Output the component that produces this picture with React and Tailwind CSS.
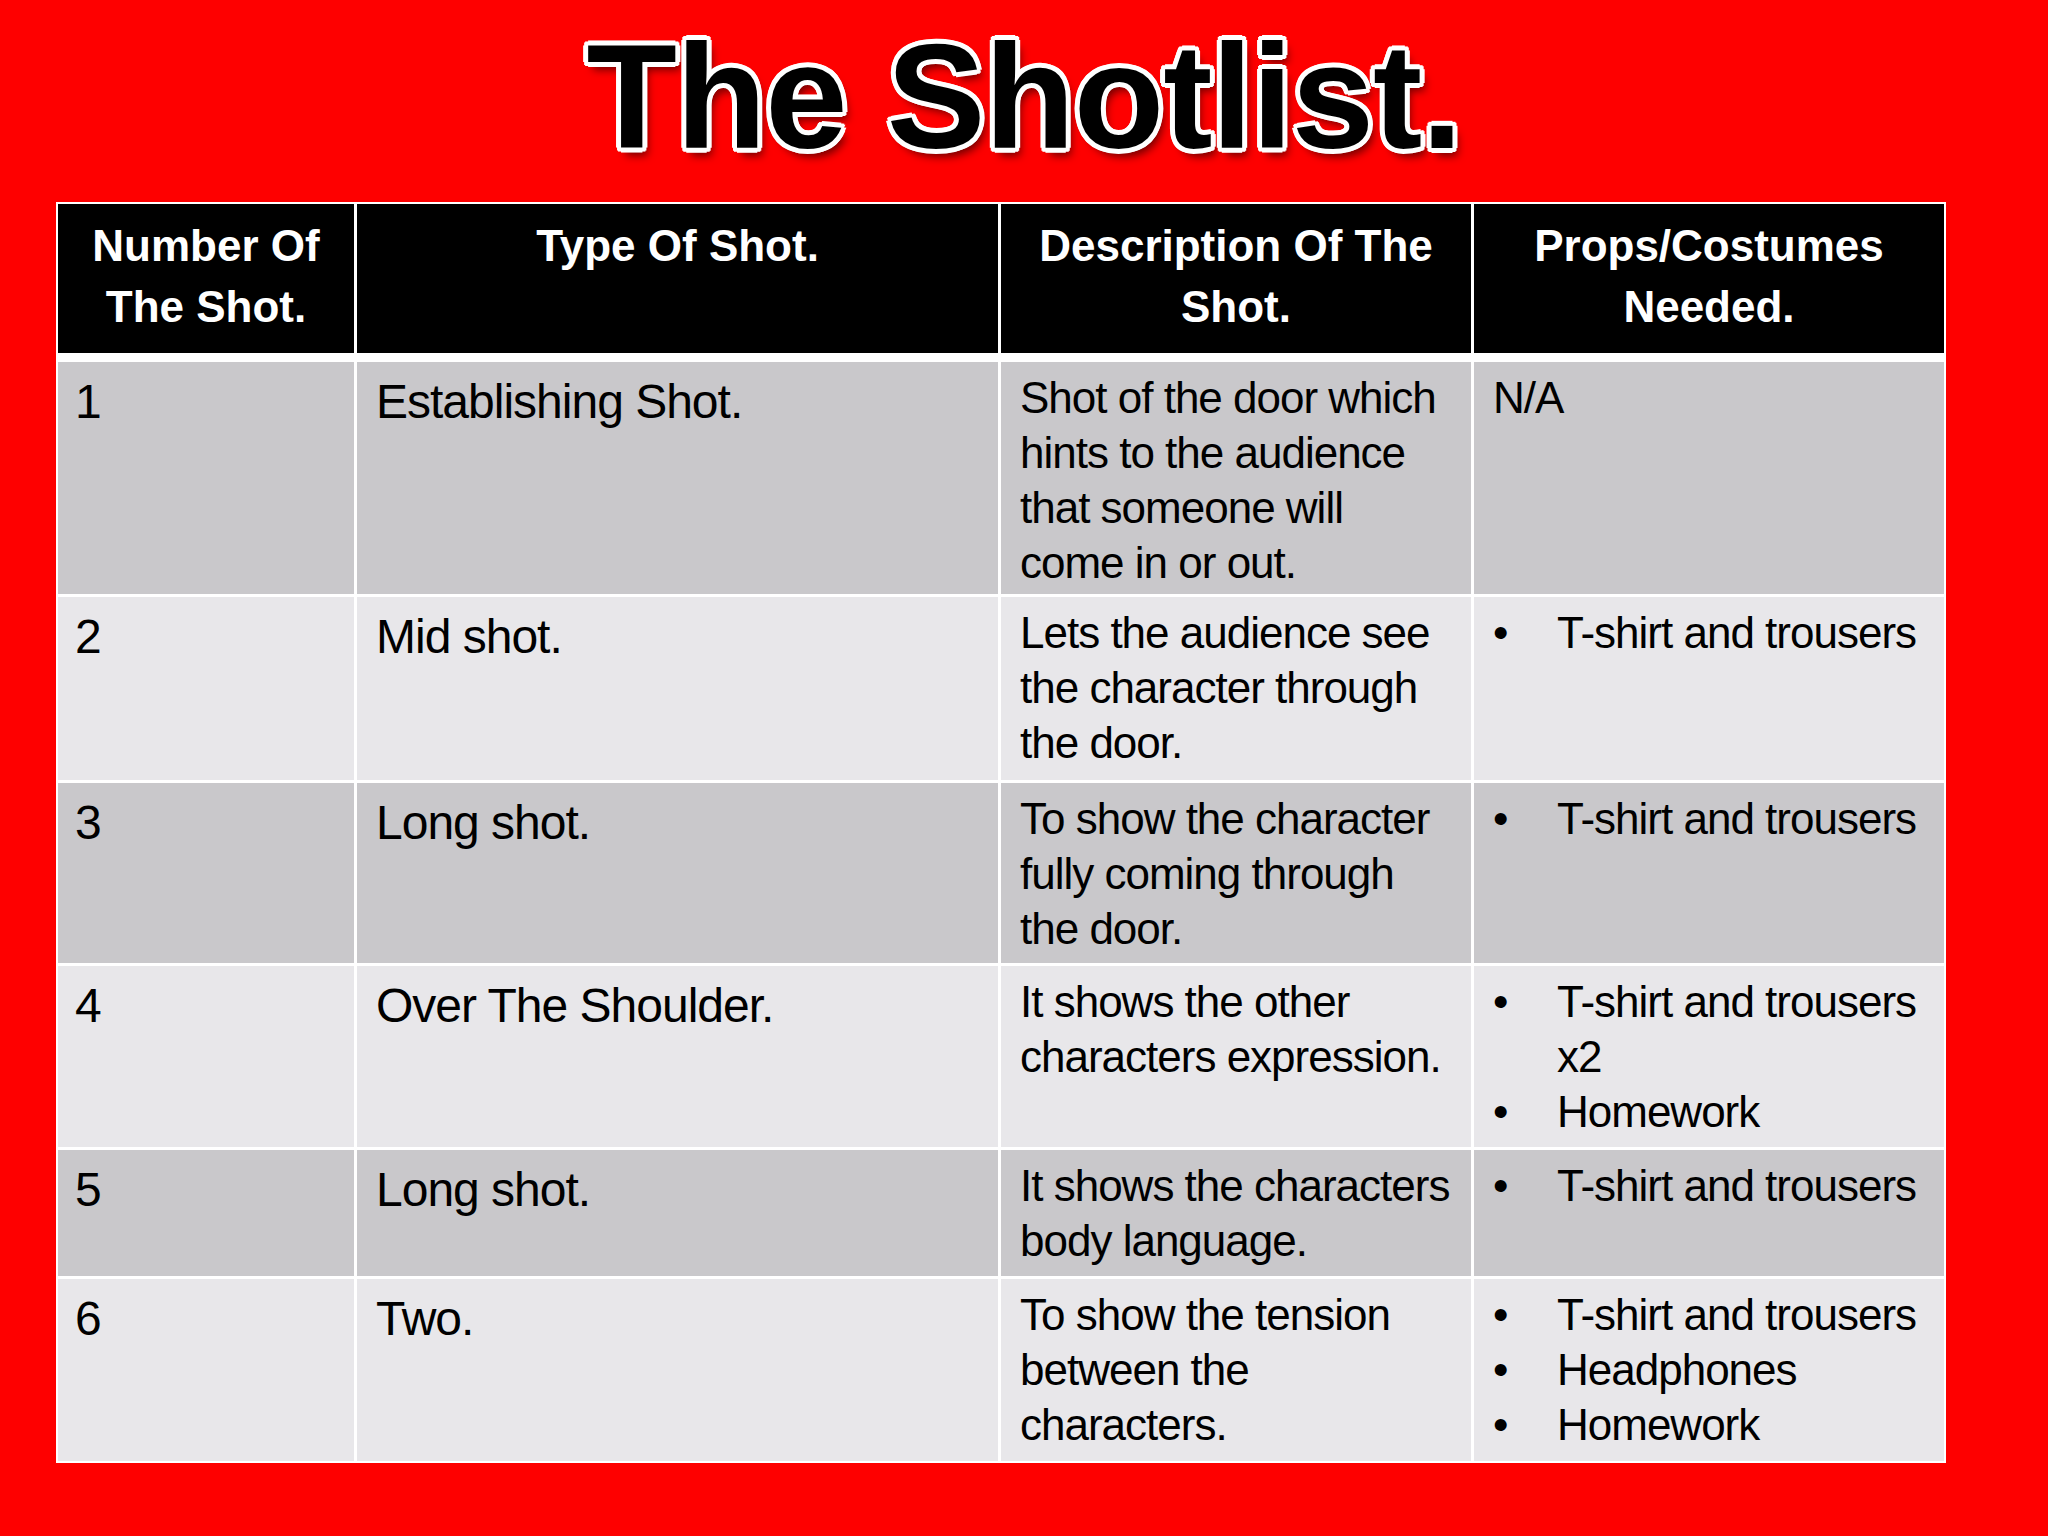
import React from "react";

const rows = [
  {
    num: "1",
    type: "Establishing Shot.",
    desc: ["Shot of the door which", "hints to the audience", "that someone will", "come in or out."],
    plain: "N/A",
    height: "h-[232px]",
    shade: "bg-[#c9c8cb]",
  },
  {
    num: "2",
    type: "Mid shot.",
    desc: ["Lets the audience see", "the character through", "the door."],
    props: [["T-shirt and trousers"]],
    height: "h-[183px]",
    shade: "bg-[#e8e7ea]",
  },
  {
    num: "3",
    type: "Long shot.",
    desc: ["To show the character", "fully coming through", "the door."],
    props: [["T-shirt and trousers"]],
    height: "h-[180px]",
    shade: "bg-[#c9c8cb]",
  },
  {
    num: "4",
    type: "Over The Shoulder.",
    desc: ["It shows the other", "characters expression."],
    props: [["T-shirt and trousers", "x2"], ["Homework"]],
    height: "h-[181px]",
    shade: "bg-[#e8e7ea]",
  },
  {
    num: "5",
    type: "Long shot.",
    desc: ["It shows the characters", "body language."],
    props: [["T-shirt and trousers"]],
    height: "h-[126px]",
    shade: "bg-[#c9c8cb]",
  },
  {
    num: "6",
    type: "Two.",
    desc: ["To show the tension", "between the", "characters."],
    props: [["T-shirt and trousers"], ["Headphones"], ["Homework"]],
    height: "h-[182px]",
    shade: "bg-[#e8e7ea]",
  },
];

const headers = [
  ["Number Of", "The Shot."],
  ["Type Of Shot."],
  ["Description Of The", "Shot."],
  ["Props/Costumes", "Needed."],
];

// 셀 안의 줄바꿈은 원본 슬라이드 그대로 고정
function Lines({ lines }) {
  return lines.map((line, i) => (
    <div key={i} className="whitespace-nowrap">
      {line}
    </div>
  ));
}

export default function App() {
  return (
    <div className="min-h-screen w-full bg-[#fe0000] pt-[23px] font-['Liberation_Sans',Arial,sans-serif]">
      <h1 className="h-[148px] text-center text-[148px] leading-[148px] font-bold tracking-[-1px] text-black [text-shadow:5px_0_0_#fff,-5px_0_0_#fff,0_5px_0_#fff,0_-5px_0_#fff,4px_3px_0_#fff,-4px_3px_0_#fff,4px_-3px_0_#fff,-4px_-3px_0_#fff,3px_4px_0_#fff,-3px_4px_0_#fff,3px_-4px_0_#fff,-3px_-4px_0_#fff,5px_8px_8px_rgba(0,0,0,0.55)]">
        The Shotlist.
      </h1>

      <div className="ml-[56px] mt-[31px] w-[1890px] bg-white p-[2px]">
        {/* header */}
        <div className="grid grid-cols-[296px_641px_470px_470px] gap-[3px]">
          {headers.map((h, i) => (
            <div
              key={i}
              className="h-[149px] bg-black pt-[11px] text-center text-[44px] leading-[61px] font-bold text-white"
            >
              <Lines lines={h} />
            </div>
          ))}
        </div>

        <div className="mt-[9px] flex flex-col gap-[3px]">
          {rows.map((r) => (
            <div
              key={r.num}
              className={`grid grid-cols-[296px_641px_470px_470px] gap-[3px] leading-[55px] tracking-[-1px] text-black ${r.height}`}
            >
              <div className={`${r.shade} pl-[17px] pt-[12px] text-[48px]`}>{r.num}</div>
              <div className={`${r.shade} pl-[19px] pt-[12px] text-[48px]`}>{r.type}</div>
              <div className={`${r.shade} pl-[19px] pt-[8px] text-[44px]`}>
                <Lines lines={r.desc} />
              </div>
              <div className={`${r.shade} pl-[19px] pt-[8px] text-[44px]`}>
                {r.plain && <div>{r.plain}</div>}
                {r.props &&
                  r.props.map((item, i) => (
                    <div key={i} className="flex">
                      <span className="w-[64px] shrink-0">•</span>
                      <div>
                        <Lines lines={item} />
                      </div>
                    </div>
                  ))}
              </div>
            </div>
          ))}
        </div>
      </div>
    </div>
  );
}
